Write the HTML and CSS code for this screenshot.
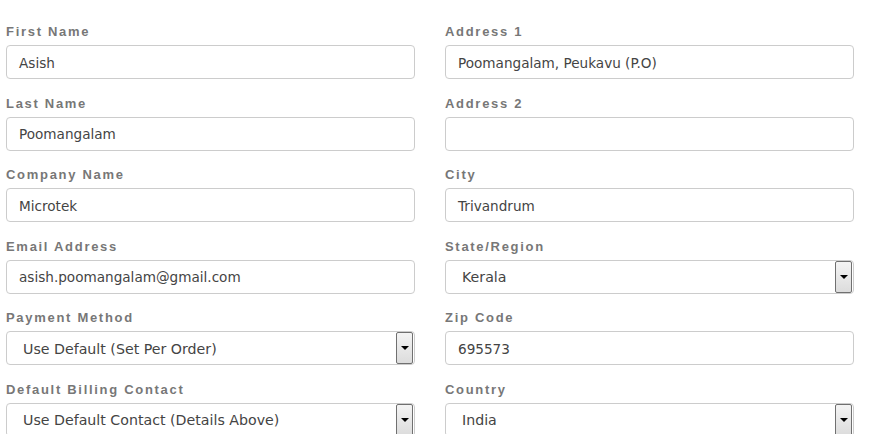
FILE: index.html
```html
<!DOCTYPE html>
<html>
<head>
<meta charset="utf-8">
<link rel="stylesheet" href="styles.css">
</head>
<body>
<form class="form">
  <div class="col">
    <div class="field"><label class="lbl">First Name</label><div class="box">Asish</div></div>
    <div class="field"><label class="lbl">Last Name</label><div class="box">Poomangalam</div></div>
    <div class="field"><label class="lbl">Company Name</label><div class="box">Microtek</div></div>
    <div class="field"><label class="lbl">Email Address</label><div class="box">asish.poomangalam@gmail.com</div></div>
    <div class="field"><label class="lbl">Payment Method</label><div class="box sel"><span class="val">Use Default (Set Per Order)</span><span class="arrow"></span></div></div>
    <div class="field"><label class="lbl">Default Billing Contact</label><div class="box sel"><span class="val">Use Default Contact (Details Above)</span><span class="arrow"></span></div></div>
  </div>
  <div class="col">
    <div class="field"><label class="lbl">Address 1</label><div class="box">Poomangalam, Peukavu (P.O)</div></div>
    <div class="field"><label class="lbl">Address 2</label><div class="box"></div></div>
    <div class="field"><label class="lbl">City</label><div class="box">Trivandrum</div></div>
    <div class="field"><label class="lbl">State/Region</label><div class="box sel"><span class="val">Kerala</span><span class="arrow"></span></div></div>
    <div class="field"><label class="lbl">Zip Code</label><div class="box">695573</div></div>
    <div class="field"><label class="lbl">Country</label><div class="box sel"><span class="val">India</span><span class="arrow"></span></div></div>
  </div>
</form>
</body>
</html>
```

FILE: styles.css
```css
html, body {
  margin: 0;
  padding: 0;
  background: #fff;
}
.form {
  display: grid;
  grid-template-columns: 409px 409px;
  column-gap: 30px;
  padding: 24px 0 0 6px;
}
.col {
  display: flex;
  flex-direction: column;
}
.field {
  height: 71.6px;
  display: flex;
  flex-direction: column;
}
.lbl {
  font-family: "Liberation Sans", Arial, sans-serif;
  font-weight: bold;
  font-size: 13px;
  letter-spacing: 1.7px;
  color: #777;
  line-height: 16px;
  height: 16px;
  margin-bottom: 5px;
}
.box {
  box-sizing: border-box;
  height: 34px;
  border: 1px solid #ccc;
  border-radius: 4px;
  padding: 1px 12px 0;
  font-family: "DejaVu Sans", Verdana, sans-serif;
  font-size: 13.6px;
  color: #444;
  line-height: 32px;
  display: flex;
  align-items: center;
}
.sel {
  padding: 0 1px 0 16px;
  justify-content: space-between;
  font-size: 14.2px;
}
.val {
  white-space: nowrap;
  padding-top: 1px;
}
.arrow {
  box-sizing: border-box;
  width: 17px;
  height: 32px;
  border: 1px solid #707070;
  border-radius: 2px;
  background: linear-gradient(#f4f4f4, #dcdcdc);
  display: flex;
  align-items: center;
  justify-content: center;
}
.arrow::after {
  content: "";
  border-left: 4px solid transparent;
  border-right: 4px solid transparent;
  border-top: 4px solid #000;
}
```
